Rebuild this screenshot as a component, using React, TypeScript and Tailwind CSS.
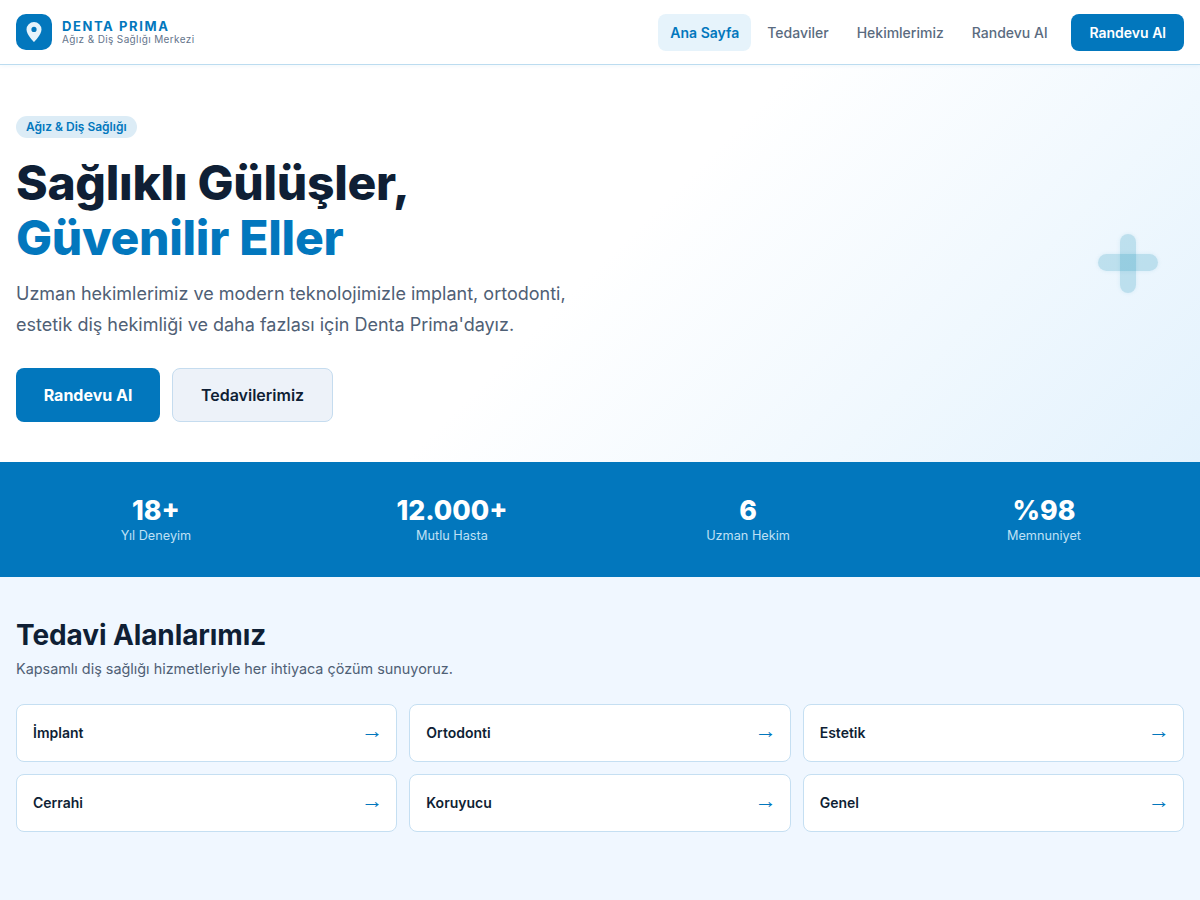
/**
 * Landing page: header, hero, stats band and treatment grid.
 */
const NAV_LINKS = ['Tedaviler', 'Hekimlerimiz', 'Randevu Al'];

const STATS = [
  { value: '18+', label: 'Yıl Deneyim' },
  { value: '12.000+', label: 'Mutlu Hasta' },
  { value: '6', label: 'Uzman Hekim' },
  { value: '%98', label: 'Memnuniyet' },
];

const TREATMENTS = ['İmplant', 'Ortodonti', 'Estetik', 'Cerrahi', 'Koruyucu', 'Genel'];

export default function App() {
  return (
    <div className="min-h-[900px] bg-[#f0f7ff] font-['Inter',sans-serif] text-[#0f1f35]">
      {/* Header */}
      <header className="relative z-10 flex h-[65px] items-center justify-between border-b border-[#bcdcf0] bg-white px-4 shadow-[0_1px_4px_rgba(2,119,189,0.06)]">
        <div className="flex items-center gap-2.5">
          <div className="flex h-9 w-9 items-center justify-center rounded-[10px] bg-[#0277bd]">
            <svg width="24" height="24" viewBox="0 0 24 24" fill="#e6f3fb">
              <path
                fillRule="evenodd"
                d="M12 2a7.5 7.5 0 0 0-7.5 7.5C4.5 14.8 12 22 12 22s7.5-7.2 7.5-12.5A7.5 7.5 0 0 0 12 2Zm0 10a2.6 2.6 0 1 1 0-5.2 2.6 2.6 0 0 1 0 5.2Z"
              />
            </svg>
          </div>
          <div className="flex flex-col">
            <span className="text-[13px] leading-[14px] font-bold tracking-[1.6px] text-[#0277bd]">DENTA PRIMA</span>
            <span className="text-[10px] leading-[12px] tracking-[0.37px] text-[#64748b]">Ağız &amp; Diş Sağlığı Merkezi</span>
          </div>
        </div>
        <nav className="flex items-center gap-1">
          <a className="flex h-[37px] items-center rounded-lg bg-[#e6f3fb] px-3 pt-px text-sm font-semibold text-[#0277bd]">Ana Sayfa</a>
          {NAV_LINKS.map(link => (
            <a key={link} className="flex h-[37px] items-center px-3 pt-px text-sm font-medium text-[#5a6b80]">
              {link}
            </a>
          ))}
          <a className="ml-2 flex h-[37px] items-center rounded-lg bg-[#0277bd] px-[18px] pt-px text-sm font-semibold text-white">Randevu Al</a>
        </nav>
      </header>

      {/* Hero */}
      <section className="relative h-[397px] overflow-hidden bg-[linear-gradient(135deg,#ffffff_0%,#ffffff_50%,#e3f2fd_100%)] px-4 pt-[51px]">
        <span className="relative -top-[3px] inline-block rounded-full bg-[#dcecf6] px-2.5 py-1 text-xs leading-[14px] font-semibold text-[#0277bd]">Ağız &amp; Diş Sağlığı</span>
        <h1 className="mt-[14px] text-[48px] leading-[55px] font-extrabold tracking-[-0.28px]">
          Sağlıklı Gülüşler,
          <br />
          <span className="text-[#0277bd]">Güvenilir Eller</span>
        </h1>
        <p className="mt-[14px] w-[580px] text-lg leading-[30.6px] text-[#4f6075]">
          Uzman hekimlerimiz ve modern teknolojimizle implant, ortodonti,
          <br />
          estetik diş hekimliği ve daha fazlası için Denta Prima'dayız.
        </p>
        <div className="mt-7 flex gap-3">
          <a className="flex h-[54px] w-[144px] items-center justify-center rounded-lg bg-[#0277bd] text-base font-bold text-white">Randevu Al</a>
          <a className="flex h-[54px] w-[161px] items-center justify-center rounded-lg border border-[#c5dcef] bg-[#edf2f9] text-base font-semibold">Tedavilerimiz</a>
        </div>

        {/* Decorative cross */}
        <div className="absolute top-[169px] left-[1120px] h-[59px] w-[16px] rounded-full bg-[#0288b0]/20 shadow-[0_0_4px_rgba(2,136,176,0.1)] blur-[0.5px]" />
        <div className="absolute top-[189px] left-[1098px] h-[17px] w-[60px] rounded-full bg-[#0288b0]/20 shadow-[0_0_4px_rgba(2,136,176,0.1)] blur-[0.5px]" />
      </section>

      {/* Stats */}
      <section className="grid h-[115px] grid-cols-4 items-center gap-4 bg-[#0277bd] px-4 pb-0.5 text-center">
        {STATS.map(stat => (
          <div key={stat.label}>
            <div className="text-[26.7px] leading-[34px] font-extrabold text-white">{stat.value}</div>
            <div className="text-[12.7px] leading-[18px] text-[#bfe0f5]">{stat.label}</div>
          </div>
        ))}
      </section>

      {/* Treatments */}
      <section className="px-4 pt-[40px]">
        <h2 className="text-[28px] leading-[36px] font-bold tracking-[-0.1px]">Tedavi Alanlarımız</h2>
        <p className="mt-[6px] text-[14.4px] leading-[20px] text-[#4f6075]">Kapsamlı diş sağlığı hizmetleriyle her ihtiyaca çözüm sunuyoruz.</p>
        <div className="mt-[25px] grid grid-cols-3 gap-3">
          {TREATMENTS.map(name => (
            <div
              key={name}
              className="flex h-[58px] items-center justify-between rounded-lg border border-[#c5dff2] bg-white px-4"
            >
              <span className="text-sm font-semibold">{name}</span>
              <span className="mr-[-3px] mb-[5px] font-['Liberation_Sans',sans-serif] text-[22px] leading-none text-[#0277bd]">→</span>
            </div>
          ))}
        </div>
      </section>
    </div>
  );
}
